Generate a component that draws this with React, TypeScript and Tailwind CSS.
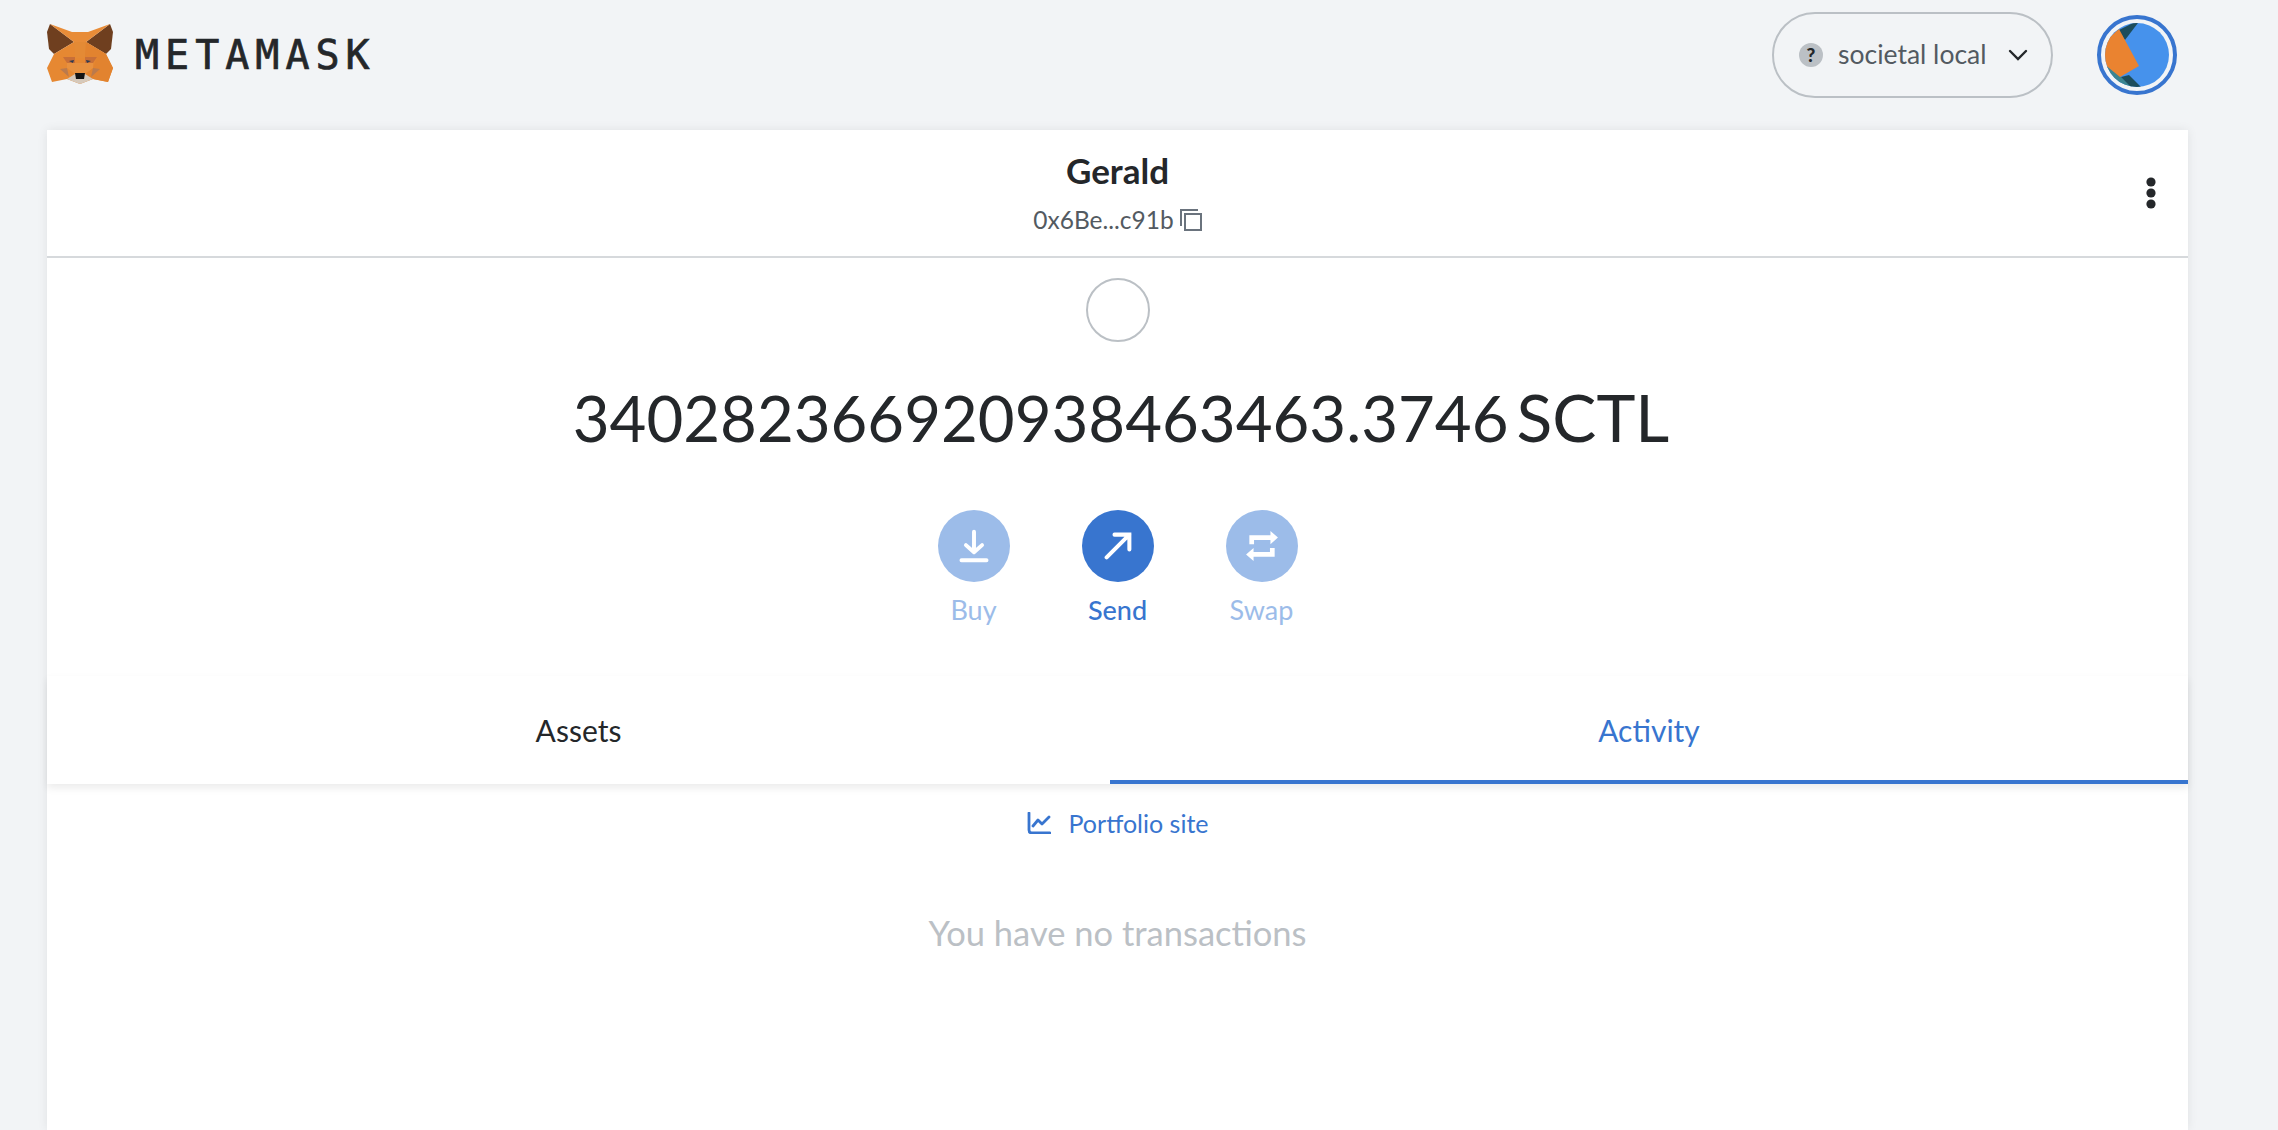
import React from "react";

const uiFont = "font-['Lato','Noto_Sans',sans-serif]";

function FoxLogo() {
  return (
    <svg viewBox="0 0 66 62" className="w-[66px] h-[62px]">
      <polygon points="3,0 27,18 7,30 2,25 0,8" fill="#6f3f1f" />
      <polygon points="63,0 39,18 59,30 64,25 66,8" fill="#6f3f1f" />
      <polygon points="7,30 27,18 39,18 59,30 66,44 61,58 46,55 33,60 20,55 5,58 0,44" fill="#e68832" />
      <polygon points="3,0 25,8 41,8 63,0 39,18 27,18" fill="#e88c38" />
      <polygon points="27,18 39,18 38,34 28,34" fill="#e48a35" />
      <polygon points="59,30 39,18 38,33 50,33 46,44 38,50 46,55 61,58 66,44" fill="#e2832f" />
      <polygon points="16,33 28,33 28,39 20,39" fill="#c86f38" />
      <polygon points="50,33 38,33 38,39 46,39" fill="#c86f38" />
      <polygon points="22,37 27,36 26,39" fill="#2d3b52" />
      <polygon points="44,37 39,36 40,39" fill="#2d3b52" />
      <polygon points="13,45 20,44 22,53" fill="#bb7a4c" />
      <polygon points="53,45 46,44 44,53" fill="#bb7a4c" />
      <polygon points="20,39 46,39 46,44 38,50 28,50 20,44" fill="#e8913f" />
      <polygon points="20,55 28,50 38,50 46,55 33,60" fill="#d6c9bb" />
      <polygon points="28,49 38,49 37,55 29,55" fill="#141414" />
    </svg>
  );
}

function AccountAvatar() {
  return (
    <div className="w-[80px] h-[80px] rounded-full border-[4px] border-[#3875cf] p-[4px] flex items-center justify-center">
      <svg viewBox="0 0 64 64" className="w-[64px] h-[64px] rounded-full">
        <rect width="64" height="64" fill="#4692ec" />
        <polygon points="12,8 36,-4 20,17" fill="#1d4d5c" />
        <polygon points="-2,40 16,54 34,70 0,70" fill="#3a8490" />
        <polygon points="16,54 24,52 38,66 30,68" fill="#1d4d5c" />
        <polygon points="14,6 34,43 15,54 -2,40 -2,20" fill="#ea8330" />
      </svg>
    </div>
  );
}

function ActionButton({ label, active, children }: { label: string; active?: boolean; children: React.ReactNode }) {
  return (
    <div className="w-[72px] flex flex-col items-center">
      <div className={`w-[72px] h-[72px] rounded-full flex items-center justify-center ${active ? "bg-[#3875cf]" : "bg-[#9cbce9]"}`}>
        {children}
      </div>
      <span className={`mt-[14px] text-[27px] leading-[28px] ${active ? "text-[#3875cf] font-medium" : "text-[#9cbce9]"}`}>{label}</span>
    </div>
  );
}

export default function App() {
  return (
    <div className={`h-[1130px] overflow-hidden bg-[#f2f4f6] text-[#24272a] ${uiFont}`}>
      {/* Header */}
      <header className="h-[130px] pl-[47px] pr-[101px] flex items-start justify-between">
        <div className="flex items-center gap-[22px] pt-[24px]">
          <FoxLogo />
          <span className="font-['DejaVu_Sans_Mono',monospace] text-[40px] leading-[60px] tracking-[6px] [-webkit-text-stroke:0.7px_#24272a] text-[#24272a]">METAMASK</span>
        </div>
        <div className="flex items-center gap-[44px] pt-[12px]">
          <div className="w-[281px] h-[86px] rounded-full border-2 border-[#bbc0c5] flex items-center pl-[25px]">
            <span className="w-[24px] h-[24px] rounded-full bg-[#bbc0c5] text-[#24272a] font-black text-[19px] flex items-center justify-center">?</span>
            <span className="ml-[15px] text-[26.5px] text-[#535a61]">societal local</span>
            <svg viewBox="0 0 20 12" className="w-[20px] h-[12px] ml-[22px]" fill="none" stroke="#24272a" strokeWidth="2.4" strokeLinecap="round">
              <path d="M2 2l8 8 8-8" />
            </svg>
          </div>
          <AccountAvatar />
        </div>
      </header>

      {/* Wallet card */}
      <main className="ml-[47px] w-[2141px] h-[1000px] bg-white shadow-[0_0_10px_rgba(0,0,0,0.08)] flex flex-col items-center">
        <div className="relative w-full h-[128px] border-b-2 border-[#d6d9dc] flex flex-col items-center">
          <span className="mt-[20px] text-[35px] leading-[40px] font-bold">Gerald</span>
          <div className="mt-[14px] flex items-center gap-[6px] text-[24.5px] leading-[32px] text-[#535a61]">
            <span>0x6Be...c91b</span>
            <svg viewBox="0 0 22 22" className="w-[22px] h-[22px]" fill="none" stroke="#6a737d" strokeWidth="2">
              <rect x="5" y="5" width="16" height="16" />
              <path d="M1 17V1h17" />
            </svg>
          </div>
          <svg viewBox="0 0 10 32" className="absolute right-[32px] top-[47px] w-[10px] h-[32px]" fill="#24272a">
            <circle cx="5" cy="5" r="4.6" />
            <circle cx="5" cy="16" r="4.6" />
            <circle cx="5" cy="27" r="4.6" />
          </svg>
        </div>

        <div className="mt-[20px] w-[64px] h-[64px] rounded-full border-2 border-[#bbc0c5]" />
        <div className="mt-[35px] ml-[7px] flex items-baseline gap-[8px] leading-[80px] whitespace-nowrap">
          <span className="text-[63.5px]">340282366920938463463.3746</span>
          <span className="text-[66px]">SCTL</span>
        </div>

        <div className="mt-[52px] flex gap-[72px]">
          <ActionButton label="Buy">
            <svg viewBox="0 0 34 38" className="w-[34px] h-[34px]" fill="none" stroke="#fff" strokeWidth="4.4" strokeLinecap="round" strokeLinejoin="round">
              <path d="M17 3v23M8 18l9 8 9-8M3 35h28" />
            </svg>
          </ActionButton>
          <ActionButton label="Send" active>
            <svg viewBox="0 0 32 32" className="w-[28px] h-[28px]" fill="none" stroke="#fff" strokeWidth="4.6" strokeLinecap="round">
              <path d="M3 29L29 3M12 3h17v17" />
            </svg>
          </ActionButton>
          <ActionButton label="Swap">
            <svg viewBox="0 0 34 32" className="w-[32px] h-[30px]" fill="none" stroke="#fff" strokeWidth="5">
              <path d="M6 14V7h22M6 25h22v-7" />
              <path d="M26 0l8 7-8 7zM8 18l-8 7 8 7z" fill="#fff" stroke="none" />
            </svg>
          </ActionButton>
        </div>

        {/* Tabs */}
        <div className="mt-[52px] w-full h-[108px] flex shadow-[0_4px_8px_rgba(0,0,0,0.08)] text-[30px]">
          <div className="w-[1063px] flex items-center justify-center">Assets</div>
          <div className="flex-1 pt-[4px] border-b-4 border-[#3875cf] text-[#3875cf] flex items-center justify-center">Activity</div>
        </div>

        <div className="mt-[23px] flex items-center gap-[18px] text-[25px] leading-[32px] text-[#3875cf]">
          <svg viewBox="0 0 24 22" className="w-[24px] h-[22px]" fill="none" stroke="#3875cf" strokeWidth="2.8" strokeLinecap="round" strokeLinejoin="round">
            <path d="M2 1v17q0 3 3 3h18M6 14l5-6 4 4 7-7" />
          </svg>
          <span>Portfolio site</span>
        </div>
        <div className="mt-[74px] text-[34.5px] leading-[40px] text-[#bbc0c5]">You have no transactions</div>
      </main>
    </div>
  );
}
